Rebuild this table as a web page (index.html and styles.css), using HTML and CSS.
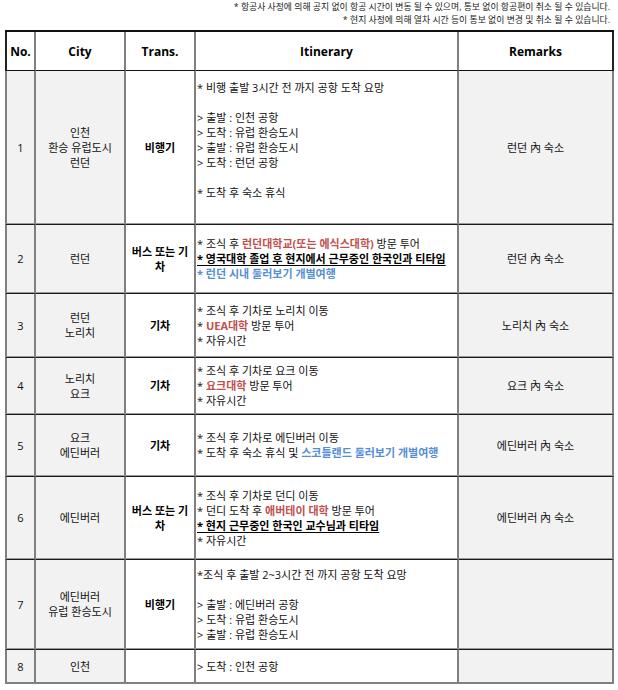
FILE: index.html
```html
<!DOCTYPE html>
<html lang="ko">
<head>
<meta charset="utf-8">
<title>Itinerary</title>
<link rel="stylesheet" href="styles.css">
</head>
<body>
<div class="page">
  <div class="notes">
    <p>* 항공사 사정에 의해 공지 없이 항공 시간이 변동 될 수 있으며, 통보 없이 항공편이 취소 될 수 있습니다.</p>
    <p>* 현지 사정에 의해 열차 시간 등이 통보 없이 변경 및 취소 될 수 있습니다.</p>
  </div>
  <table class="plan">
    <colgroup>
      <col class="c-no"><col class="c-city"><col class="c-trans"><col class="c-itin"><col class="c-rem">
    </colgroup>
    <thead>
      <tr class="rh"><th>No.</th><th>City</th><th>Trans.</th><th>Itinerary</th><th>Remarks</th></tr>
    </thead>
    <tbody>
      <tr class="r1">
        <td class="no">1</td>
        <td class="city">인천<br>환승 유럽도시<br>런던</td>
        <td class="trans">비행기</td>
        <td class="itin pad-b">
          <div>* 비행 출발 3시간 전 까지 공항 도착 요망</div>
          <div class="gap"></div>
          <div>&gt; 출발 : 인천 공항</div>
          <div>&gt; 도착 : 유럽 환승도시</div>
          <div>&gt; 출발 : 유럽 환승도시</div>
          <div>&gt; 도착 : 런던 공항</div>
          <div class="gap"></div>
          <div>* 도착 후 숙소 휴식</div>
        </td>
        <td class="rem">런던 內 숙소</td>
      </tr>
      <tr class="r2">
        <td class="no">2</td>
        <td class="city">런던</td>
        <td class="trans">버스 또는 기<br>차</td>
        <td class="itin">
          <div>* 조식 후 <span class="red">런던대학교(또는 에식스대학)</span> 방문 투어</div>
          <div class="em">* 영국대학 졸업 후 현지에서 근무중인 한국인과 티타임</div>
          <div class="blue">* 런던 시내 둘러보기 개별여행</div>
        </td>
        <td class="rem">런던 內 숙소</td>
      </tr>
      <tr class="r3">
        <td class="no">3</td>
        <td class="city">런던<br>노리치</td>
        <td class="trans">기차</td>
        <td class="itin">
          <div>* 조식 후 기차로 노리치 이동</div>
          <div>* <span class="red">UEA대학</span> 방문 투어</div>
          <div>* 자유시간</div>
        </td>
        <td class="rem">노리치 內 숙소</td>
      </tr>
      <tr class="r4">
        <td class="no">4</td>
        <td class="city">노리치<br>요크</td>
        <td class="trans">기차</td>
        <td class="itin">
          <div>* 조식 후 기차로 요크 이동</div>
          <div>* <span class="red">요크대학</span> 방문 투어</div>
          <div>* 자유시간</div>
        </td>
        <td class="rem">요크 內 숙소</td>
      </tr>
      <tr class="r5">
        <td class="no">5</td>
        <td class="city">요크<br>에딘버러</td>
        <td class="trans">기차</td>
        <td class="itin">
          <div>* 조식 후 기차로 에딘버러 이동</div>
          <div>* 도착 후 숙소 휴식 및 <span class="blue">스코틀랜드 둘러보기 개별여행</span></div>
        </td>
        <td class="rem">에딘버러 內 숙소</td>
      </tr>
      <tr class="r6">
        <td class="no">6</td>
        <td class="city">에딘버러</td>
        <td class="trans">버스 또는 기<br>차</td>
        <td class="itin">
          <div>* 조식 후 기차로 던디 이동</div>
          <div>* 던디 도착 후 <span class="red">애버테이 대학</span> 방문 투어</div>
          <div class="em">* 현지 근무중인 한국인 교수님과 티타임</div>
          <div>* 자유시간</div>
        </td>
        <td class="rem">에딘버러 內 숙소</td>
      </tr>
      <tr class="r7">
        <td class="no">7</td>
        <td class="city">에딘버러<br>유럽 환승도시</td>
        <td class="trans">비행기</td>
        <td class="itin">
          <div>*조식 후 출발 2~3시간 전 까지 공항 도착 요망</div>
          <div class="gap"></div>
          <div>&gt; 출발 : 에딘버러 공항</div>
          <div>&gt; 도착 : 유럽 환승도시</div>
          <div>&gt; 출발 : 유럽 환승도시</div>
        </td>
        <td class="rem"></td>
      </tr>
      <tr class="r8">
        <td class="no">8</td>
        <td class="city">인천</td>
        <td class="trans"></td>
        <td class="itin">
          <div>&gt; 도착 : 인천 공항</div>
        </td>
        <td class="rem"></td>
      </tr>
    </tbody>
  </table>
</div>
</body>
</html>
```

FILE: styles.css
```css
* { box-sizing: border-box; margin: 0; padding: 0; }
html, body { background: #fff; }
body {
  font-family: "Open Sans", "Noto Sans CJK KR", sans-serif;
  color: #111;
  font-size: 11px;
  line-height: 15px;
}
.page { width: 618px; padding: 0 4px 0 5px; }

.notes {
  text-align: right;
  font-size: 8.85px;
  line-height: 13px;
  height: 30px;
  padding: 1px 4px 0 0;
  color: #1a1a1a;
}

.plan {
  width: 609px;
  table-layout: fixed;
  border-collapse: separate;
  border-spacing: 0;
  border-top: 2px solid #111;
}
.c-no { width: 31px; }
.c-city { width: 90px; }
.c-trans { width: 70px; }
.c-itin { width: 263px; }
.c-rem { width: 155px; }

.plan th, .plan td {
  border-right: 2px solid #808080;
  text-align: center;
  vertical-align: middle;
}
.plan th:first-child, .plan td:first-child { border-left: 2px solid #808080; }
.plan th:first-child { border-left-color: #222; }
.plan th:last-child { border-right-color: #222; }

.plan th {
  font-weight: 700;
  font-size: 12px;
  color: #000;
  border-bottom: 1px solid #111;
  background: #fff;
}
.plan td { border-bottom: 1px solid #9a9a9a; }
.plan tbody tr + tr td { border-top: 1px solid #1a1a1a; }
.plan tbody tr:last-child td { border-bottom: 2px solid #808080; }

.rh { height: 39px; }
.r1 { height: 153px; }
.r2 { height: 69px; }
.r3 { height: 64px; }
.r4 { height: 57px; }
.r5 { height: 62px; }
.r6 { height: 83px; }
.r7 { height: 90px; }
.r8 { height: 35px; }

.plan td.no, .plan td.city, .plan td.rem { background: #f2f2f2; }
.plan td.trans { font-weight: 700; color: #000; }
.plan td.itin { text-align: left; padding-left: 1px; }
.plan td.pad-b { padding-bottom: 15px; }
.gap { height: 15px; }

.red { color: #c0504d; font-weight: 700; }
.blue { color: #558ed5; font-weight: 700; }
.em {
  font-weight: 700;
  color: #000;
  text-decoration: underline;
  text-underline-offset: 2px;
}
```
